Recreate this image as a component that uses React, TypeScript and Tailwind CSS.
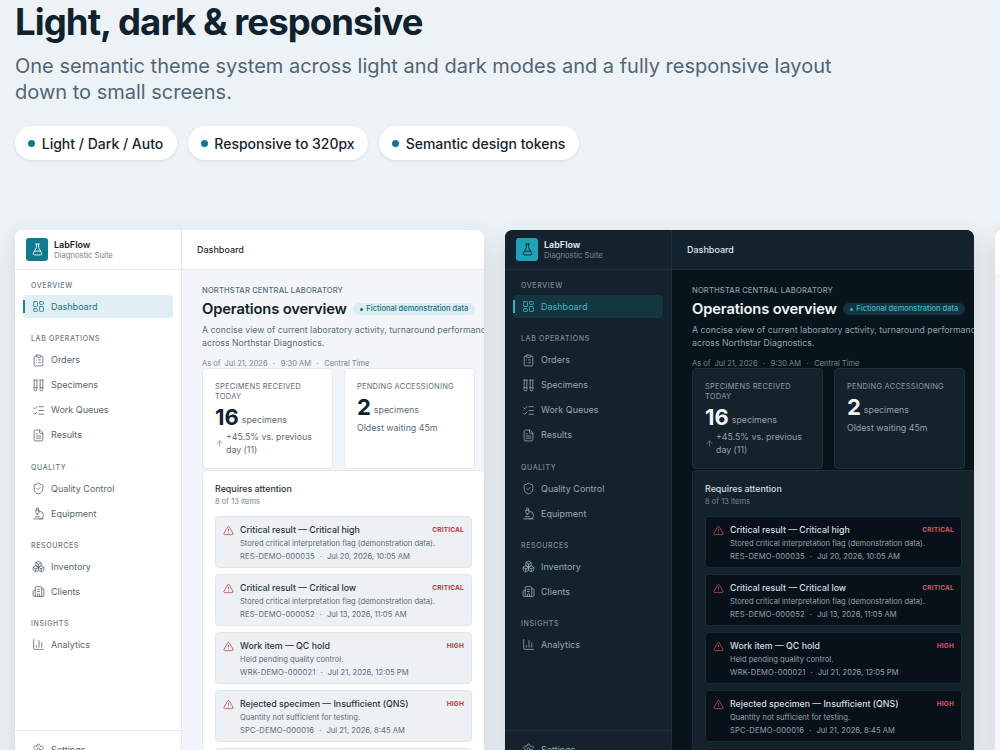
import {
    ArrowUp,
    Boxes,
    Building2,
    ChartColumn,
    ClipboardList,
    FileText,
    FlaskConical,
    LayoutDashboard,
    ListChecks,
    Microscope,
    Settings,
    ShieldCheck,
    TestTubes,
    TriangleAlert,
} from "lucide-react";

const themes = {
    light: {
        frame: "bg-[#f2f6f9] border-[#e3e9ee]",
        side: "bg-white border-[#e3e9ee]",
        top: "bg-white border-[#e3e9ee]",
        logo: "bg-[#0f7a90] text-white",
        brand: "text-[#14242f]",
        faint: "text-[#74858f]",
        label: "text-[#677883]",
        nav: "text-[#56676f]",
        active: "bg-[#e0eff3] text-[#1f7287]",
        bar: "bg-[#1f8298]",
        crumb: "text-[#1d2c36]",
        eyebrow: "text-[#5b6c77]",
        title: "text-[#10222e]",
        body: "text-[#5b6d79]",
        pill: "bg-[#dcedf1] text-[#156f84]",
        dot: "bg-[#156f84]",
        card: "bg-white border-[#e3e9ee]",
        row: "bg-[#edf1f4] border-[#e1e7eb]",
        rowTitle: "text-[#26343e]",
        red: "text-[#b9343f]",
    },
    dark: {
        frame: "bg-[#08141c] border-[#1d2d38]",
        side: "bg-[#14222d] border-[#1f2f3a]",
        top: "bg-[#14222d] border-[#1f2f3a]",
        logo: "bg-[#1ea3b8] text-[#0b1a22]",
        brand: "text-[#e6edf1]",
        faint: "text-[#76878f]",
        label: "text-[#7c8c96]",
        nav: "text-[#98a7b0]",
        active: "bg-[#14363f] text-[#43b6c7]",
        bar: "bg-[#34b3c6]",
        crumb: "text-[#dfe7eb]",
        eyebrow: "text-[#8d9ca5]",
        title: "text-[#f0f4f6]",
        body: "text-[#92a1aa]",
        pill: "bg-[#123540] text-[#43b6c7]",
        dot: "bg-[#34b3c6]",
        card: "bg-[#14222c] border-[#1f2f3a]",
        row: "bg-[#08111a] border-[#1b2a35]",
        rowTitle: "text-[#d5dee3]",
        red: "text-[#d9545c]",
    },
};

const groups = [
    { label: "OVERVIEW", items: [{ name: "Dashboard", icon: LayoutDashboard, active: true }] },
    {
        label: "LAB OPERATIONS",
        items: [
            { name: "Orders", icon: ClipboardList },
            { name: "Specimens", icon: TestTubes },
            { name: "Work Queues", icon: ListChecks },
            { name: "Results", icon: FileText },
        ],
    },
    {
        label: "QUALITY",
        items: [
            { name: "Quality Control", icon: ShieldCheck },
            { name: "Equipment", icon: Microscope },
        ],
    },
    {
        label: "RESOURCES",
        items: [
            { name: "Inventory", icon: Boxes },
            { name: "Clients", icon: Building2 },
        ],
    },
    { label: "INSIGHTS", items: [{ name: "Analytics", icon: ChartColumn }] },
];

const alerts = [
    { title: "Critical result — Critical high", desc: "Stored critical interpretation flag (demonstration data).", id: "RES-DEMO-000035", when: "Jul 20, 2026, 10:05 AM", level: "CRITICAL" },
    { title: "Critical result — Critical low", desc: "Stored critical interpretation flag (demonstration data).", id: "RES-DEMO-000052", when: "Jul 13, 2026, 11:05 AM", level: "CRITICAL" },
    { title: "Work item — QC hold", desc: "Held pending quality control.", id: "WRK-DEMO-000021", when: "Jul 21, 2026, 12:05 PM", level: "HIGH" },
    { title: "Rejected specimen — Insufficient (QNS)", desc: "Quantity not sufficient for testing.", id: "SPC-DEMO-000016", when: "Jul 21, 2026, 8:45 AM", level: "HIGH" },
    { title: "Rejected specimen — Hemolyzed", desc: "Specimen not suitable for testing.", id: "SPC-DEMO-000011", when: "Jul 21, 2026, 8:05 AM", level: "HIGH" },
];

function Chip({ label }: { label: string }) {
    return (
        <div className="flex h-[34px] items-center gap-[6.5px] rounded-full bg-white px-[13.25px] text-[14px] font-medium text-[#14242f] shadow-[0_1px_3px_rgba(20,40,55,0.1)]">
            <span className="h-[7px] w-[7px] rounded-full bg-[#0f7a90]" />
            {label}
        </div>
    );
}

function Sidebar({ mode }: { mode: "light" | "dark" }) {
    const t = themes[mode];
    return (
        <aside className={`flex w-[167px] shrink-0 flex-col border-r ${t.side}`}>
            <div className={`flex h-[40px] shrink-0 items-center gap-[6px] border-b pl-[11px] ${t.top}`}>
                <div className={`flex h-[23px] w-[22px] items-center justify-center rounded-[3px] ${t.logo}`}>
                    <FlaskConical size={13} strokeWidth={1.6} />
                </div>
                <div>
                    <div className={`text-[9px] leading-[12px] font-semibold ${t.brand}`}>LabFlow</div>
                    <div className={`text-[7.7px] leading-[10px] ${t.faint}`}>Diagnostic Suite</div>
                </div>
            </div>
            <nav className="flex flex-col gap-[15px] px-[8px] pt-[10px]">
                {groups.map((g) => (
                    <div key={g.label}>
                        <div className={`mb-[4.25px] pl-[8px] text-[7px] leading-[11px] font-medium tracking-[0.09em] ${t.label}`}>{g.label}</div>
                        <div className="flex flex-col gap-[2px]">
                            {g.items.map((item) => {
                                const Icon = item.icon;
                                const active = "active" in item;
                                return (
                                    <div key={item.name} className={`relative flex h-[23px] items-center gap-[6.5px] rounded-[4px] pl-[8.5px] text-[9px] ${active ? t.active : t.nav}`}>
                                        {active && <span className={`absolute top-[5px] left-0 h-[13px] w-[1.5px] ${t.bar}`} />}
                                        <Icon size={13} strokeWidth={1.5} />
                                        {item.name}
                                    </div>
                                );
                            })}
                        </div>
                    </div>
                ))}
            </nav>
            <div className="flex-1" />
            <div className={`flex h-[60px] shrink-0 items-start gap-[6.5px] border-t px-[16.5px] pt-[12px] text-[9px] ${t.top} ${t.nav}`}>
                <Settings size={13} strokeWidth={1.5} />
                Settings
            </div>
        </aside>
    );
}

function Kpi({ mode, label, value, unit, children }: { mode: "light" | "dark"; label: string; value: string; unit: string; children: React.ReactNode }) {
    const t = themes[mode];
    return (
        <div className={`h-[101px] w-[131px] shrink-0 rounded-[4px] border px-[12px] pt-[13px] ${t.card}`}>
            <div className={`text-[7.5px] leading-[10px] tracking-[0.03em] ${t.eyebrow}`}>{label}</div>
            <div className="mt-[3px] flex items-center gap-[3px]">
                <span className={`text-[22px] leading-[24px] font-bold ${t.title}`}>{value}</span>
                <span className={`pt-[6px] text-[8.8px] leading-[12px] ${t.body}`}>{unit}</span>
            </div>
            {children}
        </div>
    );
}

function Panel({ mode }: { mode: "light" | "dark" }) {
    const t = themes[mode];
    return (
        <div className={`flex h-[560px] w-[469px] shrink-0 overflow-hidden rounded-[8px] shadow-[0_8px_24px_rgba(20,40,55,0.14)] ${t.frame}`}>
            <Sidebar mode={mode} />
            <div className="flex min-w-0 flex-1 flex-col">
                <div className={`flex h-[40px] shrink-0 items-center border-b px-[15px] text-[9px] font-medium ${t.top} ${t.crumb}`}>Dashboard</div>
                <div className="pt-[16px] pl-[20px]">
                    <div className={`text-[7.6px] leading-[10px] font-medium tracking-[0.02em] ${t.eyebrow}`}>NORTHSTAR CENTRAL LABORATORY</div>
                    <div className="mt-[1px] flex h-[24px] items-center gap-[6.5px]">
                        <span className={`text-[14.75px] font-semibold tracking-[-0.01em] whitespace-nowrap ${t.title}`}>Operations overview</span>
                        <span className={`flex h-[12px] items-center gap-[3px] rounded-full px-[7px] text-[7.5px] font-medium whitespace-nowrap ${t.pill}`}>
                            <span className={`h-[3px] w-[3px] rounded-full ${t.dot}`} />
                            Fictional demonstration data
                        </span>
                    </div>
                    <p className={`mt-[3px] text-[8.75px] leading-[12.5px] whitespace-nowrap ${t.body}`}>
                        A concise view of current laboratory activity, turnaround performance and quality
                        <br />
                        across Northstar Diagnostics.
                    </p>
                    <div className={`mt-[10px] flex h-[9px] items-center gap-[5.5px] text-[7.5px] ${t.faint}`}>
                        <span className="mr-[-1.5px]">As of</span>
                        <span>Jul 21, 2026</span>
                        <span>·</span>
                        <span>9:30 AM</span>
                        <span>·</span>
                        <span>Central Time</span>
                    </div>
                    <div className="flex gap-[11px]">
                        <Kpi mode={mode} label="SPECIMENS RECEIVED TODAY" value="16" unit="specimens">
                            <div className={`mt-[2px] flex items-center gap-[2px] text-[8.8px] leading-[12.5px] ${t.body}`}>
                                <ArrowUp size={9} strokeWidth={1.5} className="shrink-0" />
                                <span>+45.5% vs. previous day (11)</span>
                            </div>
                        </Kpi>
                        <Kpi mode={mode} label="PENDING ACCESSIONING" value="2" unit="specimens">
                            <div className={`mt-[3px] text-[8.8px] leading-[12.5px] ${t.body}`}>Oldest waiting 45m</div>
                        </Kpi>
                    </div>
                    <div className={`mt-[1px] w-[283px] rounded-[4px] border px-[12px] pt-[12px] ${t.card}`}>
                        <div className={`text-[8.9px] leading-[12px] font-medium ${t.rowTitle}`}>Requires attention</div>
                        <div className={`mt-[1px] text-[7.5px] leading-[12px] ${t.faint}`}>8 of 13 items</div>
                        <div className="mt-[8px] flex flex-col gap-[6.5px]">
                            {alerts.map((a) => (
                                <div key={a.id} className={`flex h-[51.5px] rounded-[4px] border pt-[7px] pr-[7px] pl-[7px] ${t.row}`}>
                                    <TriangleAlert size={11} strokeWidth={1.5} className={`mt-[1px] shrink-0 ${t.red}`} />
                                    <div className="ml-[6px] min-w-0 flex-1">
                                        <div className="flex items-center justify-between">
                                            <span className={`text-[8.8px] leading-[12px] font-medium ${t.rowTitle}`}>{a.title}</span>
                                            <span className={`pt-[1px] text-[6.5px] font-bold tracking-[0.03em] ${t.red}`}>{a.level}</span>
                                        </div>
                                        <div className={`mt-[2px] text-[7.6px] leading-[12.5px] ${t.body}`}>{a.desc}</div>
                                        <div className={`flex gap-[5px] text-[7.6px] leading-[12.5px] ${t.body}`}>
                                            <span className="tracking-[0.02em]">{a.id}</span>
                                            <span>·</span>
                                            <span>{a.when}</span>
                                        </div>
                                    </div>
                                </div>
                            ))}
                        </div>
                    </div>
                </div>
            </div>
        </div>
    );
}

export default function App() {
    return (
        <div className="h-[750px] overflow-hidden bg-[#edf2f6] pl-[15px] font-['Inter',sans-serif]">
            <h1 className="text-[36.5px] leading-[44px] font-bold tracking-[-0.025em] text-[#10222e]">Light, dark &amp; responsive</h1>
            <p className="mt-[9px] w-[840px] text-[20px] leading-[26px] text-[#4f6675]">
                One semantic theme system across light and dark modes and a fully responsive layout down to small screens.
            </p>
            <div className="mt-[21px] flex gap-[11px]">
                <Chip label="Light / Dark / Auto" />
                <Chip label="Responsive to 320px" />
                <Chip label="Semantic design tokens" />
            </div>
            <div className="mt-[70px] flex gap-[21px]">
                <Panel mode="light" />
                <Panel mode="dark" />
                <div className="flex h-[560px] w-[200px] shrink-0 flex-col overflow-hidden rounded-[8px] bg-[#f5f8fa] shadow-[0_8px_24px_rgba(20,40,55,0.14)]">
                    <div className="h-[44px] bg-white" />
                </div>
            </div>
        </div>
    );
}
